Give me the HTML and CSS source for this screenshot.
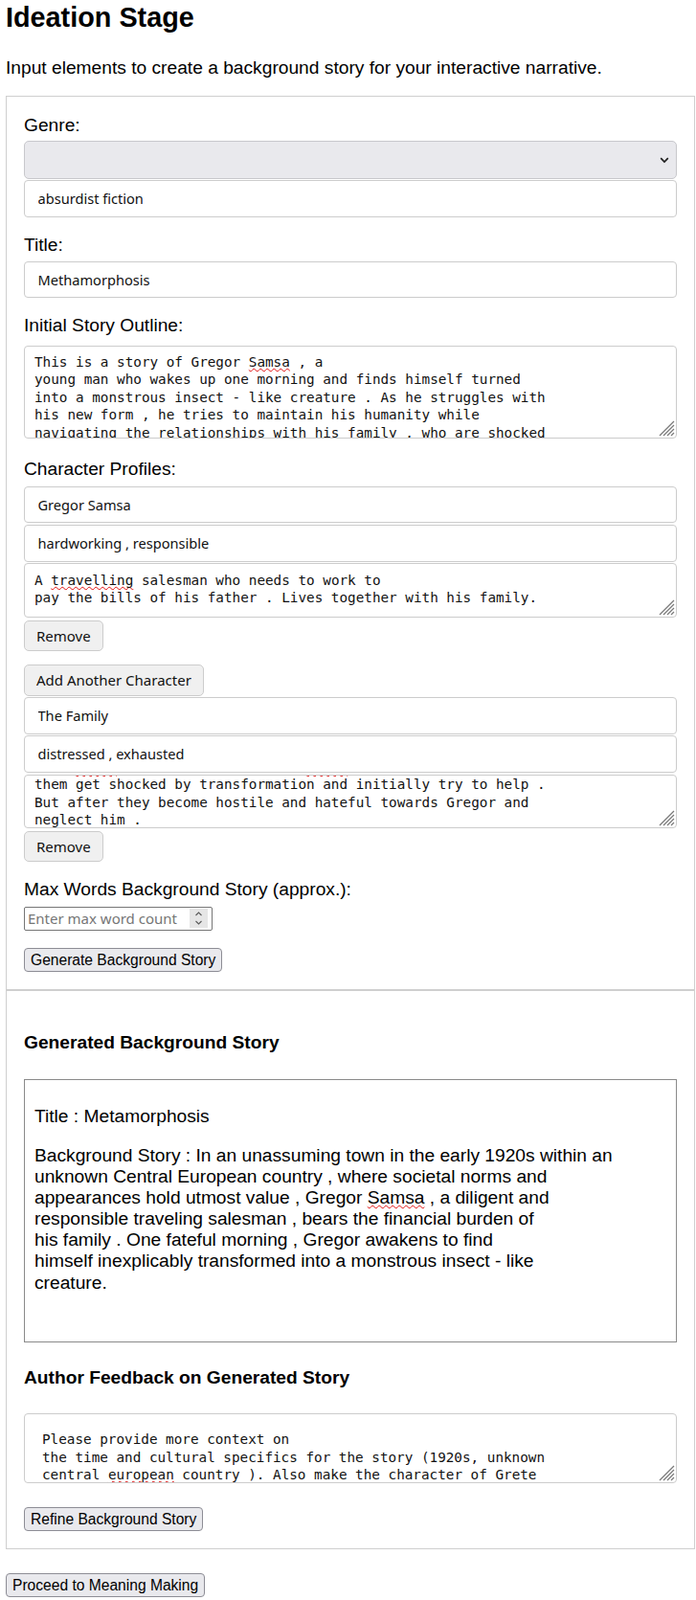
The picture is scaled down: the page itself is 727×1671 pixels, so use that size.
FILE: index.html
```html
<!DOCTYPE html>
<html lang="en">
<head>
<meta charset="utf-8">
<title>Ideation Stage</title>
<link rel="stylesheet" href="styles.css">
</head>
<body>
<h1 class="page-title">Ideation Stage</h1>
<p class="intro">Input elements to create a background story for your interactive narrative.</p>

<section class="panel">
  <label class="field-label field-label--first">Genre:</label>
  <div class="select-wrap">
    <select class="select"><option></option></select>
    <svg class="chevron" width="10" height="7" viewBox="0 0 10 7"><path d="M1.2 1.2 L5 5 L8.8 1.2" fill="none" stroke="#1e1e1e" stroke-width="1.7"/></svg>
  </div>
  <input class="text-input after-select" type="text" value="absurdist fiction">

  <label class="field-label">Title:</label>
  <input class="text-input after-label" type="text" value="Methamorphosis">

  <label class="field-label">Initial Story Outline:</label>
  <div class="textarea textarea--outline"><div class="ta-content">This is a story of Gregor <span class="typo">Samsa</span> , a
young man who wakes up one morning and finds himself turned
into a monstrous insect - like creature . As he struggles with
his new form , he tries to maintain his humanity while
navigating the relationships with his family , who are shocked
and repulsed by his new appearance .</div><svg class="grip" width="18" height="18" viewBox="0 0 18 18"><path d="M17 2 L2 17 M17 6 L6 17 M17 10 L10 17 M17 14 L14 17" stroke="#7a7a7a" stroke-width="1.3"/></svg></div>

  <label class="field-label field-label--after-area">Character Profiles:</label>
  <input class="text-input after-label-wide" type="text" value="Gregor Samsa">
  <input class="text-input stacked" type="text" value="hardworking , responsible">
  <div class="textarea textarea--char stacked-tight"><div class="ta-content">A <span class="typo">travelling</span> salesman who needs to work to
pay the bills of his father . Lives together with his family.</div><svg class="grip" width="18" height="18" viewBox="0 0 18 18"><path d="M17 2 L2 17 M17 6 L6 17 M17 10 L10 17 M17 14 L14 17" stroke="#7a7a7a" stroke-width="1.3"/></svg></div>
  <button class="btn-soft btn-remove" type="button">Remove</button>

  <button class="btn-soft btn-add" type="button">Add Another Character</button>
  <input class="text-input stacked-tight" type="text" value="The Family">
  <input class="text-input stacked-tight" type="text" value="distressed , exhausted">
  <div class="textarea textarea--family stacked"><div class="ta-content ta-scrolled">The family of Gregor are his parents and sister .
Mr . <span class="typo">Samsa</span> , his wife and sister <span class="typo">Grete</span> . All of
them get shocked by transformation and initially try to help .
But after they become hostile and hateful towards Gregor and
neglect him .</div><svg class="grip" width="18" height="18" viewBox="0 0 18 18"><path d="M17 2 L2 17 M17 6 L6 17 M17 10 L10 17 M17 14 L14 17" stroke="#7a7a7a" stroke-width="1.3"/></svg></div>
  <button class="btn-soft btn-remove" type="button">Remove</button>

  <label class="field-label field-label--max">Max Words Background Story (approx.):</label>
  <div class="number-wrap">
    <input class="number-input" type="number" placeholder="Enter max word count">
    <svg class="spinner" width="19" height="20" viewBox="0 0 19 20"><rect width="19" height="20" fill="#e6e6e6"/><path d="M6.5 7 L9.5 4 L12.5 7 M6.5 13 L9.5 16 L12.5 13" fill="none" stroke="#5a5a5a" stroke-width="1.1"/></svg>
  </div>
  <button class="btn-native btn-generate" type="button">Generate Background Story</button>
</section>

<section class="panel panel--result">
  <h3 class="section-title">Generated Background Story</h3>
  <div class="story">
    <p class="story-text">Title : Metamorphosis</p>
    <p class="story-text">Background Story : In an unassuming town in the early 1920s within an
unknown Central European country , where societal norms and
appearances hold utmost value , Gregor <span class="typo">Samsa</span> , a diligent and
responsible traveling salesman , bears the financial burden of
his family . One fateful morning , Gregor awakens to find
himself inexplicably transformed into a monstrous insect - like
creature.</p>
  </div>

  <h3 class="section-title section-title--feedback">Author Feedback on Generated Story</h3>
  <div class="textarea textarea--feedback"><div class="ta-content">Please provide more context on
the time and cultural specifics for the story (1920s, unknown
central <span class="typo">european</span> country ). Also make the character of Grete
more present in the story .</div><svg class="grip" width="18" height="18" viewBox="0 0 18 18"><path d="M17 2 L2 17 M17 6 L6 17 M17 10 L10 17 M17 14 L14 17" stroke="#7a7a7a" stroke-width="1.3"/></svg></div>
  <button class="btn-native btn-refine" type="button">Refine Background Story</button>
</section>

<button class="btn-native btn-proceed" type="button">Proceed to Meaning Making</button>
</body>
</html>
```

FILE: styles.css
```css
html, body {
  background: #ffffff;
}

body {
  margin: 0 0 0 6px;
  font-family: "Liberation Sans", Arial, sans-serif;
  color: #000000;
}

.page-title {
  margin: 2px 0 0;
  font-size: 28.8px;
  line-height: 33px;
  font-weight: bold;
}

.intro {
  margin: 24.5px 0 18.5px;
  font-size: 19.2px;
  line-height: 22px;
}

.panel {
  width: 720px;
  box-sizing: border-box;
  border: 1px solid #cfcfcf;
  padding: 0 18px 18px;
}

.field-label {
  display: block;
  margin-top: 18px;
  font-size: 19.2px;
  line-height: 22px;
}

.field-label--first {
  margin-top: 19px;
}

.field-label--after-area {
  margin-top: 21px;
}

.field-label--max {
  margin-top: 18.7px;
}

.select-wrap {
  position: relative;
  margin-top: 5px;
}

.select {
  display: block;
  width: 100%;
  height: 40px;
  box-sizing: border-box;
  margin: 0;
  border: 1px solid #c8c8cc;
  border-radius: 5px;
  background: #e9e9ed;
  -webkit-appearance: none;
  appearance: none;
}

.chevron {
  position: absolute;
  right: 8px;
  top: 17px;
}

.text-input {
  display: block;
  width: 100%;
  height: 38.5px;
  box-sizing: border-box;
  margin: 0;
  padding: 0 13.5px;
  border: 1px solid #cccccc;
  border-radius: 4px;
  background: #ffffff;
  font-family: "Noto Sans", "Open Sans", sans-serif;
  font-size: 14.6px;
  color: #111111;
}

.after-select {
  margin-top: 1px;
}

.after-label {
  margin-top: 6px;
}

.after-label-wide {
  margin-top: 6.5px;
}

.stacked {
  margin-top: 2px;
}

.stacked-tight {
  margin-top: 1.5px;
}

.textarea {
  position: relative;
  box-sizing: border-box;
  overflow: hidden;
  padding: 7.5px 10px 0;
  border: 1px solid #cccccc;
  border-radius: 4px;
  background: #ffffff;
  font-family: "DejaVu Sans Mono", "Liberation Mono", monospace;
  font-size: 14.3px;
  line-height: 18.4px;
  color: #111111;
}

.ta-content {
  white-space: pre;
}

.ta-scrolled {
  margin-top: -43.4px;
}

.textarea--outline {
  margin-top: 9.5px;
  height: 97.5px;
}

.textarea--char {
  height: 57px;
}

.textarea--family {
  height: 56px;
}

.textarea--feedback {
  margin-top: 25.7px;
  height: 73.3px;
  padding: 17px 18px 0;
}

.grip {
  position: absolute;
  right: 1px;
  bottom: 1px;
}

.typo {
  text-decoration-line: underline;
  text-decoration-style: wavy;
  text-decoration-color: #e01010;
  text-decoration-thickness: 1px;
  text-underline-offset: 1px;
  text-decoration-skip-ink: none;
}

.btn-soft {
  display: block;
  box-sizing: border-box;
  height: 32px;
  margin: 3px 0 0;
  padding: 0 12px;
  border: 1px solid #cccccc;
  border-radius: 5px;
  background: #f0f0f0;
  font-family: "Noto Sans", "Open Sans", sans-serif;
  font-size: 15px;
  color: #111111;
}

.btn-add {
  height: 33px;
  margin-top: 13.5px;
}

.number-wrap {
  position: relative;
  width: 197px;
  margin-top: 6.7px;
}

.number-input {
  display: block;
  width: 197px;
  height: 25px;
  box-sizing: border-box;
  margin: 0;
  padding: 0 3px;
  border: 1px solid #767676;
  border-radius: 2px;
  font-family: "Noto Sans", "Open Sans", sans-serif;
  font-size: 15px;
  color: #111111;
  -moz-appearance: textfield;
}

.number-input::-webkit-inner-spin-button,
.number-input::-webkit-outer-spin-button {
  -webkit-appearance: none;
  margin: 0;
}

.number-input::placeholder {
  color: #767676;
}

.spinner {
  position: absolute;
  right: 5px;
  top: 2.5px;
}

.btn-native {
  display: block;
  box-sizing: border-box;
  height: 25px;
  margin: 0;
  padding: 0 6px;
  border: 1px solid #8d8d95;
  border-radius: 4px;
  background: #e9e9ed;
  font-family: "Liberation Sans", Arial, sans-serif;
  font-size: 15.6px;
  line-height: 23px;
  color: #000000;
}

.btn-generate {
  margin-top: 18.3px;
}

.section-title {
  margin: 43.3px 0 0;
  font-size: 19.2px;
  line-height: 22px;
  font-weight: bold;
}

.section-title--feedback {
  margin-top: 26px;
}

.story {
  margin-top: 26.4px;
  height: 275.6px;
  box-sizing: border-box;
  padding: 9px 10px;
  border: 1px solid #8a8a8a;
  font-size: 19.2px;
  line-height: 22.1px;
}

.story-text {
  margin: 18.5px 0;
  white-space: pre-line;
}

.btn-refine {
  margin-top: 25px;
}

.btn-proceed {
  margin-top: 25px;
}
```
